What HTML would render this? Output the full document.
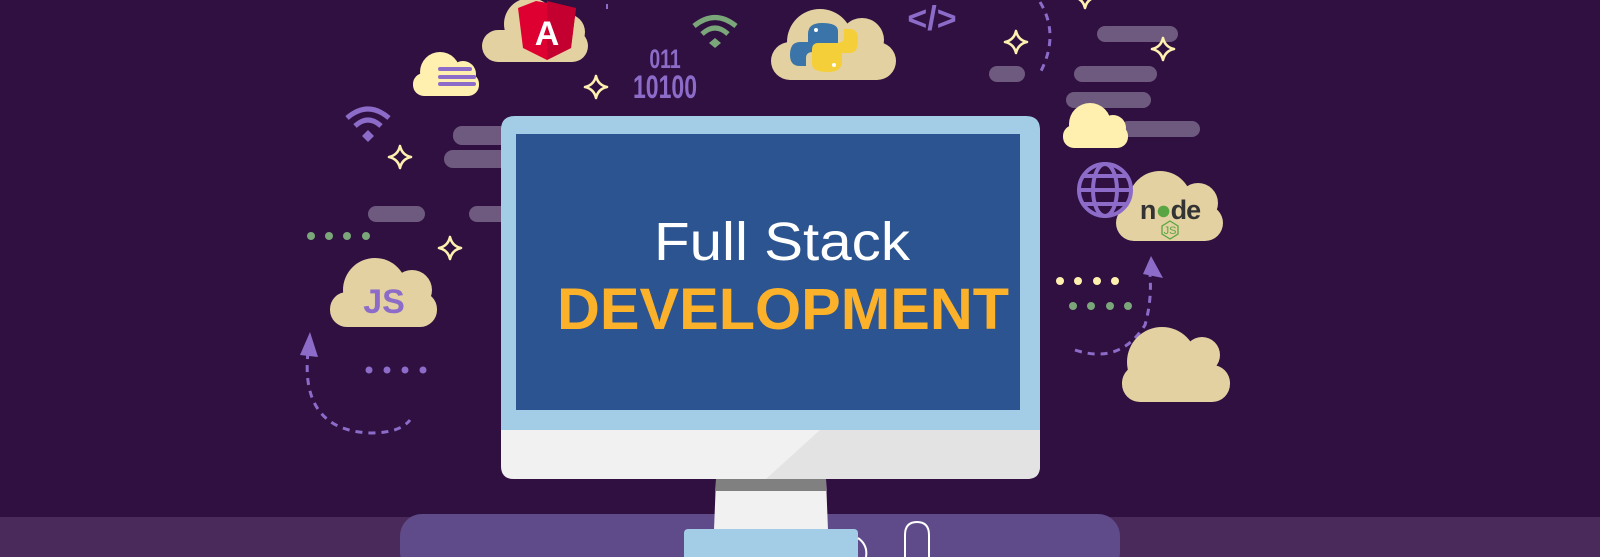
<!DOCTYPE html>
<html><head><meta charset="utf-8"><style>
html,body{margin:0;padding:0;width:1600px;height:557px;overflow:hidden;background:#2f1040}
svg{display:block}
</style></head><body>
<svg width="1600" height="557" viewBox="0 0 1600 557" xmlns="http://www.w3.org/2000/svg">
<defs>
<g id="star"><path d="M0,-11 Q2,-2 11,0 Q2,2 0,11 Q-2,2 -11,0 Q-2,-2 0,-11Z" fill="none" stroke="#fff0b0" stroke-width="2.6" stroke-linejoin="round"/></g>
</defs>
<rect width="1600" height="557" fill="#2f1040"/>
<rect x="0" y="517" width="1600" height="40" fill="#4a2a5a"/>
<rect x="400" y="514" width="720" height="60" rx="22" fill="#604b8a"/>
<g fill="#6e5a7e">
<rect x="453" y="126" width="70" height="19" rx="9"/><rect x="444" y="150" width="70" height="18" rx="9"/>
<rect x="368" y="206" width="57" height="16" rx="8"/><rect x="469" y="206" width="50" height="16" rx="8"/>
<rect x="989" y="66" width="36" height="16" rx="8"/>
<rect x="1097" y="26" width="81" height="16" rx="8"/>
<rect x="1074" y="66" width="83" height="16" rx="8"/>
<rect x="1066" y="92" width="85" height="16" rx="8"/>
<rect x="1120" y="121" width="80" height="16" rx="8"/>
</g>
<use href="#star" x="400" y="157"/><use href="#star" x="450" y="248"/><use href="#star" x="596" y="87"/>
<use href="#star" x="1016" y="42"/><use href="#star" x="1163" y="49"/><use href="#star" x="1085" y="-3"/>
<g fill="#7aa67a"><circle cx="311" cy="236" r="4"/><circle cx="329" cy="236" r="4"/><circle cx="347" cy="236" r="4"/><circle cx="366" cy="236" r="4"/>
<circle cx="1091" cy="306" r="4"/><circle cx="1110" cy="306" r="4"/><circle cx="1128" cy="306" r="4"/><circle cx="1073" cy="306" r="4"/></g>
<g fill="#fff0b0"><circle cx="1060" cy="281" r="4"/><circle cx="1078" cy="281" r="4"/><circle cx="1097" cy="281" r="4"/><circle cx="1115" cy="281" r="4"/></g>
<g fill="#8c6cc8"><circle cx="369" cy="370" r="3.5"/><circle cx="387" cy="370" r="3.5"/><circle cx="405" cy="370" r="3.5"/><circle cx="423" cy="370" r="3.5"/></g>
<g fill="none" stroke="#8c6cc8" stroke-width="3" stroke-dasharray="7 6">
<path d="M308,352 Q300,430 370,433 Q400,433 410,420"/>
<path d="M1075,350 Q1120,365 1145,325 Q1152,300 1150,275"/>
<path d="M1040,2 Q1060,35 1040,73"/>
</g>
<path d="M300,355 L310,332 L318,357Z" fill="#8c6cc8"/>
<path d="M1143,274 L1151,256 L1163,278Z" fill="#8c6cc8"/>
<g fill="#e3d1a1">
<rect x="482" y="30" width="106" height="32" rx="16"/><circle cx="530" cy="24" r="26"/><circle cx="567" cy="32" r="18"/>
<rect x="771" y="42" width="125" height="38" rx="19"/><circle cx="820" cy="42" r="33"/><circle cx="862" cy="40" r="22"/>
<rect x="1116" y="205" width="107" height="36" rx="18"/><circle cx="1160" cy="203" r="32"/><circle cx="1198" cy="203" r="20"/>
<rect x="330" y="292" width="107" height="35" rx="17"/><circle cx="375" cy="290" r="32"/><circle cx="412" cy="290" r="20"/>
<rect x="1122" y="365" width="108" height="37" rx="18"/><circle cx="1162" cy="362" r="35"/><circle cx="1202" cy="355" r="18"/>
</g>
<g fill="#fff0b0">
<rect x="413" y="73" width="66" height="23" rx="11"/><circle cx="440" cy="72" r="20"/><circle cx="463" cy="74" r="13"/>
<rect x="1063" y="125" width="65" height="23" rx="11"/><circle cx="1090" cy="124" r="21"/><circle cx="1113" cy="128" r="13"/>
</g>
<g stroke="#8c6cc8" stroke-width="4" stroke-linecap="round"><line x1="440" y1="69" x2="470" y2="69"/><line x1="440" y1="77" x2="474" y2="77"/><line x1="440" y1="84" x2="474" y2="84"/></g>
<path d="M536,1 L576,8 L571,48 L547,60 L523,48 L518,8Z" fill="#dd0031"/>
<path d="M547,1 L576,8 L571,48 L547,60Z" fill="#c3002f"/>
<text x="547" y="45" font-family="Liberation Sans,sans-serif" font-weight="bold" font-size="34" fill="#fff" text-anchor="middle">A</text>
<path d="M822,23 Q808,23 808,34 L808,42 L800,42 Q790,42 790,55 Q790,66 800,66 L806,66 L806,58 Q806,52 813,52 L832,52 Q838,52 838,45 L838,31 Q838,23 822,23Z" fill="#3a74a8"/>
<path d="M828,72 Q842,72 842,61 L842,53 L850,53 Q858,53 858,40 Q858,29 850,29 L844,29 L844,37 Q844,43 837,43 L818,43 Q812,43 812,50 L812,64 Q812,72 828,72Z" fill="#f5cf3a"/>
<circle cx="816" cy="30" r="2" fill="#fff"/><circle cx="834" cy="65" r="2" fill="#fff"/>
<g fill="none" stroke="#8c6cc8" stroke-width="5"><path d="M347,118 Q368,100 389,118"/><path d="M355,126 Q368,114 381,126"/></g>
<path d="M368,130 L374,136 L368,142 L362,136Z" fill="#8c6cc8"/>
<g fill="none" stroke="#7aa67a" stroke-width="5"><path d="M694,26 Q715,9 736,26"/><path d="M702,34 Q715,22 728,34"/></g>
<path d="M715,38 L721,43 L715,48 L709,43Z" fill="#7aa67a"/>
<line x1="607" y1="4" x2="607" y2="9" stroke="#8c6cc8" stroke-width="2"/>
<g transform="translate(665,0) scale(0.72,1)">
<text x="0" y="68" font-family="Liberation Sans,sans-serif" font-weight="bold" font-size="27" fill="#8c6cc8" text-anchor="middle">011</text>
<text x="0" y="98" font-family="Liberation Sans,sans-serif" font-weight="bold" font-size="32" fill="#8c6cc8" text-anchor="middle">10100</text>
</g>
<text x="932" y="30" font-family="Liberation Sans,sans-serif" font-weight="bold" font-size="34" fill="#8c6cc8" text-anchor="middle">&lt;/&gt;</text>
<g fill="none" stroke="#8c6cc8" stroke-width="4"><circle cx="1105" cy="190" r="26"/><ellipse cx="1105" cy="190" rx="12" ry="26"/><line x1="1079" y1="190" x2="1131" y2="190"/><path d="M1083,176 H1127 M1083,204 H1127"/></g>
<text x="1170" y="219" font-family="Liberation Sans,sans-serif" font-weight="bold" font-size="27" fill="#333" text-anchor="middle" letter-spacing="-1">n<tspan fill="#5aa543">●</tspan>de</text>
<text x="1170" y="234" font-family="Liberation Sans,sans-serif" font-size="11" fill="#5aa543" text-anchor="middle">JS</text>
<path d="M1170,221 L1178,226 L1178,234 L1170,239 L1162,234 L1162,226Z" fill="none" stroke="#5aa543" stroke-width="1.3"/>
<text x="384" y="313" font-family="Liberation Sans,sans-serif" font-weight="bold" font-size="34" fill="#8c6cc8" text-anchor="middle">JS</text>
<path d="M515,116 L1026,116 Q1040,116 1040,130 L1040,430 L501,430 L501,130 Q501,116 515,116Z" fill="#a3cde6"/>
<rect x="516" y="134" width="504" height="276" fill="#2c5490"/>
<path d="M501,430 L1040,430 L1040,466 Q1040,479 1027,479 L514,479 Q501,479 501,466Z" fill="#f1f1f1"/>
<path d="M820,430 L1040,430 L1040,466 Q1040,479 1027,479 L766,479Z" fill="#e3e3e3"/>
<path d="M716,479 L826,479 L828,530 L714,530Z" fill="#f1f1f1"/>
<rect x="716" y="479" width="110" height="12" fill="#808080"/>
<rect x="684" y="529" width="174" height="40" rx="4" fill="#a3cde6"/>
<path d="M858,538 Q868,545 866,557" fill="none" stroke="#fff" stroke-width="2"/>
<path d="M905,557 L905,535 Q905,522 917,522 Q929,522 929,535 L929,557" fill="none" stroke="#fff" stroke-width="2"/>
<text x="782" y="260" font-family="Liberation Sans,sans-serif" font-weight="300" font-size="54" fill="#fff" text-anchor="middle" textLength="256" lengthAdjust="spacingAndGlyphs">Full Stack</text>
<text x="783" y="329" font-family="Liberation Sans,sans-serif" font-weight="bold" font-size="58" fill="#fbb12a" text-anchor="middle" textLength="452" lengthAdjust="spacingAndGlyphs">DEVELOPMENT</text>
</svg>
</body></html>
